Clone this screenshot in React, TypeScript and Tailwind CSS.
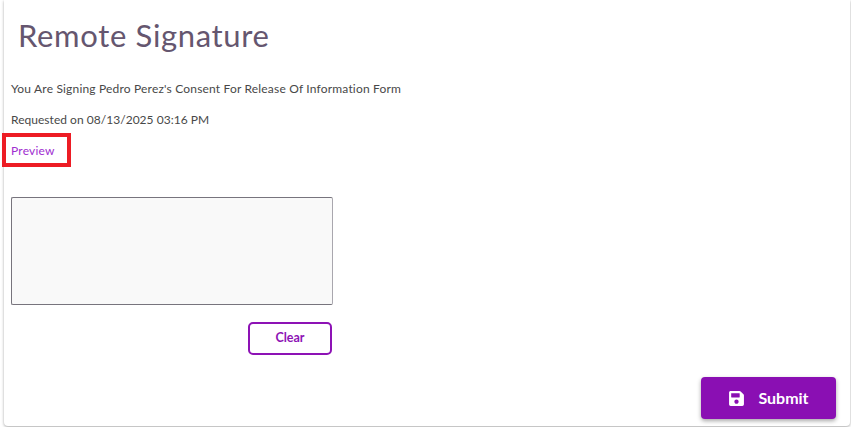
export default function App() {
  return (
    <main className="relative h-[427px] w-[851px] overflow-hidden bg-white font-['Lato','Open_Sans',sans-serif]">
      <section className="ml-[4px] mr-[1px] flex h-[426px] flex-col rounded-b-[4px] bg-white pl-[7px] pr-[14px] shadow-[0_1px_3px_rgba(0,0,0,0.35)]">
        <h1 className="mt-[15px] ml-[7px] text-[31px] leading-[40px] font-normal tracking-[0.66px] text-[#65566f]">
          Remote Signature
        </h1>

        <p className="mt-[25px] text-[12px] leading-[18px] tracking-[0.18px] text-[#484848]">
          You Are Signing Pedro Perez's Consent For Release Of Information Form
        </p>
        <p className="mt-[13px] text-[12px] leading-[18px] tracking-[0.03px] text-[#484848]">
          Requested on 08/13/2025 03:16 PM
        </p>
        <a href="#" className="mt-[13px] w-fit text-[12px] leading-[18px] tracking-[0.22px] text-[#a02dd0]">
          Preview
        </a>

        <div className="mt-[37px] h-[108px] w-[322px] rounded-[2px] border border-[#77747d] border-r-[#a9a7ae] bg-[#f9f9f9]" />

        <div className="mt-[17px] flex w-[321px] justify-end">
          <button className="h-[33px] w-[84px] rounded-[5px] border-2 border-[#8d12b5] bg-white text-[12.5px] font-bold text-[#8d12b5]">
            Clear
          </button>
        </div>

        <div className="mt-[22px] flex justify-end">
          <button className="flex h-[42px] w-[135px] items-center justify-center gap-[13px] rounded-[4px] bg-[#8a0fb3] text-[16px] font-bold text-white shadow-[0_2px_4px_rgba(0,0,0,0.35)]">
            <svg width="17" height="17" viewBox="0 0 448 512" fill="currentColor">
              <path d="M433.9 129.9l-83.9-83.9A48 48 0 0 0 316.1 32H48C21.5 32 0 53.5 0 80v352c0 26.5 21.5 48 48 48h352c26.5 0 48-21.5 48-48V163.9a48 48 0 0 0-14.1-34zM224 416c-35.3 0-64-28.7-64-64 0-35.3 28.7-64 64-64s64 28.7 64 64c0 35.3-28.7 64-64 64zm96-304.5V212c0 6.6-5.4 12-12 12H76c-6.6 0-12-5.4-12-12V108c0-6.6 5.4-12 12-12h228.5c3.2 0 6.2 1.3 8.5 3.5l3.5 3.5c2.3 2.3 3.5 5.300 3.500 8.500z" />
            </svg>
            Submit
          </button>
        </div>
      </section>

      {/* annotation drawn over the screenshot */}
      <div className="absolute left-[2px] top-[133px] h-[34px] w-[69px] border-[4px] border-[#ed1c24]" />
    </main>
  );
}
